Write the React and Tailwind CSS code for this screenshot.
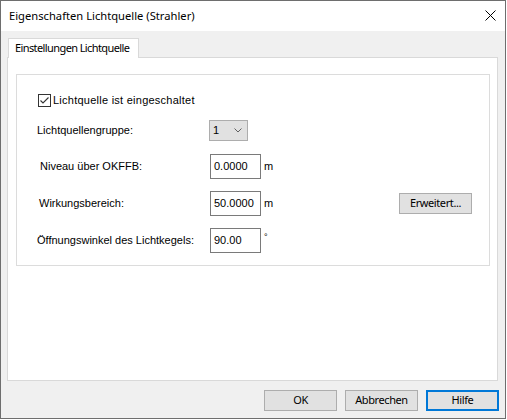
import React from 'react';

const ui = { fontFamily: '"Noto Sans", "Open Sans", sans-serif' };
const sans = { fontFamily: '"Liberation Sans", Arial, sans-serif' };

function Field({ value }) {
  return (
    <div
      className="w-[51px] h-[25px] bg-white border border-[#7a7a7a] flex items-center pl-[3px] text-[11px] text-black"
      style={sans}
    >
      {value}
    </div>
  );
}

function Btn({ children, focused }) {
  return (
    <div
      className={
        'w-[73px] h-[21px] flex items-center justify-center text-[11px] tracking-[-0.4px] text-black bg-[#e1e1e1] whitespace-nowrap ' +
        (focused ? 'border-2 border-[#0078d7]' : 'border border-[#adadad]')
      }
      style={ui}
    >
      {children}
    </div>
  );
}

export default function App() {
  return (
    <div className="w-[507px] h-[420px] bg-white overflow-hidden">
      <div className="w-[506px] h-[419px] border border-[#6e6e6e] flex flex-col">
        {/* Title bar */}
        <div className="h-[30px] bg-white flex items-center justify-between pl-[8px] pr-[9px] shrink-0">
          <span className="text-[11.2px] text-black whitespace-nowrap" style={ui}>
            Eigenschaften Lichtquelle (Strahler)
          </span>
          <svg width="11" height="11" viewBox="0 0 11 11" className="mb-[1px]">
            <path d="M0.5 0.5 L10.5 10.5 M10.5 0.5 L0.5 10.5" stroke="#000" strokeWidth="1" fill="none" />
          </svg>
        </div>

        {/* Body */}
        <div className="flex-1 bg-[#f0f0f0] pt-[7px] flex flex-col">
          <div className="ml-[7px] w-[131px] h-[20px] bg-white border-t border-l border-r border-[#d9d9d9] relative z-10 flex items-center pl-[6px] text-[11px] tracking-[-0.6px] text-black whitespace-nowrap" style={ui}>
            Einstellungen Lichtquelle
          </div>
          <div className="ml-[6px] -mt-[1px] w-[491px] h-[324px] bg-white border border-[#d9d9d9] pt-[16px] pl-[8px]">
            <div className="w-[474px] border border-[#dcdcdc] flex flex-col pb-[12px] text-[11px] text-black" style={sans}>
              <div className="mt-[19px] h-[13px] flex items-center pl-[21px]">
                <div className="w-[13px] h-[13px] border border-[#333333] bg-white flex items-center justify-center">
                  <svg width="11" height="11" viewBox="0 0 11 11">
                    <path d="M1.5 5.5 L4 8 L9.5 2.5" stroke="#333" strokeWidth="1.1" fill="none" />
                  </svg>
                </div>
                <span className="ml-[2px] tracking-[0.25px]">Lichtquelle ist eingeschaltet</span>
              </div>

              <div className="mt-[13px] h-[21px] flex items-center">
                <span className="pl-[20px] w-[192px]">Lichtquellengruppe:</span>
                <div className="w-[39px] h-[21px] bg-[#e1e1e1] border border-[#adadad] flex items-center justify-between pl-[3px] pr-[5px]">
                  <span>1</span>
                  <svg width="8" height="5" viewBox="0 0 8 5">
                    <path d="M0.5 0.5 L4 4 L7.5 0.5" stroke="#606060" strokeWidth="1" fill="none" />
                  </svg>
                </div>
              </div>

              <div className="mt-[13px] h-[25px] flex items-center">
                <span className="pl-[23px] w-[193px]">Niveau über OKFFB:</span>
                <Field value="0.0000" />
                <span className="ml-[3px]">m</span>
              </div>

              <div className="mt-[12px] h-[25px] flex items-center">
                <span className="pl-[22px] w-[193px]">Wirkungsbereich:</span>
                <Field value="50.0000" />
                <span className="ml-[3px] w-[135px]">m</span>
                <Btn>Erweitert...</Btn>
              </div>

              <div className="mt-[12px] h-[25px] flex items-center">
                <span className="pl-[20px] w-[193px]">Öffnungswinkel des Lichtkegels:</span>
                <Field value="90.00" />
                <span className="ml-[3px] self-start mt-[3px] text-[9px]">°</span>
              </div>
            </div>
          </div>

          {/* Buttons */}
          <div className="mt-[9px] flex justify-end gap-[8px] pr-[6px]">
            <Btn>OK</Btn>
            <Btn>Abbrechen</Btn>
            <Btn focused>Hilfe</Btn>
          </div>
        </div>
      </div>
    </div>
  );
}
